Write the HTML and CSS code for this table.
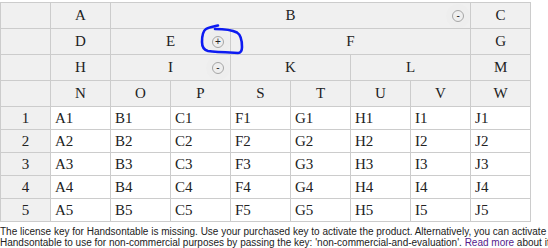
FILE: index.html
```html
<!DOCTYPE html>
<html>
<head>
<meta charset="utf-8">
<link rel="stylesheet" href="styles.css">
</head>
<body>
<div class="page">
  <table class="grid">
    <colgroup>
      <col class="col-rh">
      <col class="col-c"><col class="col-c"><col class="col-c"><col class="col-c">
      <col class="col-c"><col class="col-c"><col class="col-c"><col class="col-c">
    </colgroup>
    <thead>
      <tr>
        <th class="rh"></th>
        <th>A</th>
        <th colspan="6" class="collapsible">B<span class="toggle">-</span></th>
        <th>C</th>
      </tr>
      <tr>
        <th class="rh"></th>
        <th>D</th>
        <th colspan="2" class="collapsible">E<span class="toggle">+</span></th>
        <th colspan="4">F</th>
        <th>G</th>
      </tr>
      <tr>
        <th class="rh"></th>
        <th>H</th>
        <th colspan="2" class="collapsible">I<span class="toggle">-</span></th>
        <th colspan="2">K</th>
        <th colspan="2">L</th>
        <th>M</th>
      </tr>
      <tr>
        <th class="rh"></th>
        <th>N</th><th>O</th><th>P</th><th>S</th><th>T</th><th>U</th><th>V</th><th>W</th>
      </tr>
    </thead>
    <tbody>
      <tr><th class="rh">1</th><td>A1</td><td>B1</td><td>C1</td><td>F1</td><td>G1</td><td>H1</td><td>I1</td><td>J1</td></tr>
      <tr><th class="rh">2</th><td>A2</td><td>B2</td><td>C2</td><td>F2</td><td>G2</td><td>H2</td><td>I2</td><td>J2</td></tr>
      <tr><th class="rh">3</th><td>A3</td><td>B3</td><td>C3</td><td>F3</td><td>G3</td><td>H3</td><td>I3</td><td>J3</td></tr>
      <tr><th class="rh">4</th><td>A4</td><td>B4</td><td>C4</td><td>F4</td><td>G4</td><td>H4</td><td>I4</td><td>J4</td></tr>
      <tr><th class="rh">5</th><td>A5</td><td>B5</td><td>C5</td><td>F5</td><td>G5</td><td>H5</td><td>I5</td><td>J5</td></tr>
    </tbody>
  </table>
  <div class="license">The license key for Handsontable is missing. Use your purchased key to activate the product. Alternatively, you can activate Handsontable to use for non-commercial purposes by passing the key: 'non-commercial-and-evaluation'. <a href="#" class="license-link">Read more</a> about it in the documentation or contact us at <a href="#" class="license-link">sales@handsontable.com</a>.</div>
  <svg class="annotation" width="548" height="248" viewBox="0 0 548 248">
    <path d="M 218 25.5 C 214 26.5, 209 27, 206 29 C 203 31, 202 36, 202 42 C 202 47, 204 50, 208 51 C 216 52, 228 52.5, 238 53 C 241 53, 242 51, 242 47 C 242 40, 241 35, 237 32.5 C 232 30, 224 29, 215 29"/>
  </svg>
</div>
</body>
</html>
```
FILE: styles.css
```css
html, body {
  margin: 0;
  padding: 0;
  background: #fff;
  overflow: hidden;
}

.page {
  position: relative;
  width: 548px;
  height: 248px;
  overflow: hidden;
  padding-top: 2px;
  box-sizing: border-box;
}

.grid {
  border-collapse: separate;
  border-spacing: 0;
  table-layout: fixed;
  width: 531px;
  font-family: "Liberation Serif", "Times New Roman", serif;
  font-size: 15px;
  color: #222;
}

.col-rh { width: 51px; }
.col-c { width: 60px; }

.grid th,
.grid td {
  border-right: 1px solid #ccc;
  border-bottom: 1px solid #ccc;
  padding: 0 4px;
  white-space: nowrap;
  overflow: hidden;
}

.grid th:first-child {
  border-left: 1px solid #ccc;
}

.grid thead tr:first-child th {
  border-top: 1px solid #ccc;
}

.grid th {
  background: #f0f0f0;
  font-weight: normal;
  text-align: center;
  line-height: 25px;
}

.grid tbody th {
  line-height: 22px;
}

.grid td {
  background: #fff;
  text-align: left;
  line-height: 22px;
}

.collapsible {
  position: relative;
}

.toggle {
  position: absolute;
  top: 50%;
  right: 6px;
  transform: translateY(-50%);
  width: 10px;
  height: 10px;
  border: 1px solid #a6a6a6;
  border-radius: 50%;
  background: #eee;
  box-shadow: 0 0 0 6px #eee;
  font-family: "Liberation Sans", Arial, sans-serif;
  font-size: 10px;
  line-height: 10px;
  color: #222;
  text-align: center;
}

.license {
  width: 590px;
  padding-top: 4px;
  font-family: "Liberation Sans", Arial, sans-serif;
  font-size: 10px;
  color: #222;
  text-align: left;
}

.license-link {
  color: #551a8b;
  text-decoration: none;
}

.annotation {
  position: absolute;
  top: 0;
  left: 0;
  pointer-events: none;
}

.annotation path {
  fill: none;
  stroke: #0d1bf2;
  stroke-width: 2.6;
  stroke-linecap: round;
  stroke-linejoin: round;
}
```
